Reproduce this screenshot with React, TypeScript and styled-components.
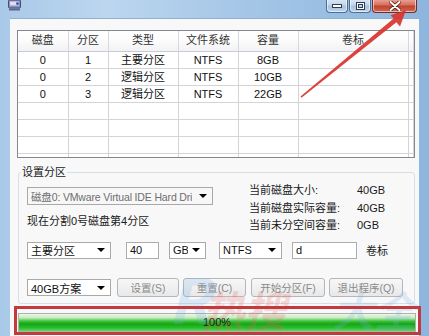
import React from "react";
import styled, { createGlobalStyle } from "styled-components";

const GlobalStyle = createGlobalStyle`
  html, body { margin: 0; padding: 0; background: #9cc1e6; }
  body { overflow: hidden; font-family: "Liberation Sans", "Noto Sans CJK SC", sans-serif; }
  * { box-sizing: border-box; }
`;

const Window = styled.div`
  position: relative;
  width: 429px;
  height: 336px;
  overflow: hidden;
  display: flex;
  flex-direction: column;
  background: linear-gradient(90deg, #a9c9e8 0%, #bcd6ef 25%, #a6c7e7 55%, #97bde2 80%, #8db5de 100%);
`;

const TitleBar = styled.div`
  height: 18px;
  flex: none;
  display: flex;
  align-items: flex-start;
  justify-content: space-between;
  padding: 0 12px 0 8px;
`;

const CaptionGroup = styled.div`
  display: flex;
  gap: 1px;
  margin-top: -1px;
`;

const CaptionButton = styled.div<{ $w: number; $close?: boolean }>`
  width: ${(p) => p.$w}px;
  height: 14px;
  display: flex;
  align-items: center;
  justify-content: center;
  border: 1px solid ${(p) => (p.$close ? "#7a2a22" : "#4f6e94")};
  border-top: none;
  border-radius: 0 0 4px 4px;
  box-shadow: inset 0 0 0 1px rgba(255, 255, 255, 0.55);
  background: ${(p) =>
    p.$close
      ? "linear-gradient(180deg, #e9a99c 0%, #d7705d 45%, #c2432e 55%, #d0694f 100%)"
      : "linear-gradient(180deg, #dde9f5 0%, #c3d6ea 45%, #a9c2df 55%, #bfd3ea 100%)"};
`;

const Client = styled.div`
  flex: 1;
  margin: 0 10px 0 10px;
  background: #f8f8f9;
  border-top: 1px solid #8fb0d2;
  padding: 11px 4px 0 7px;
  display: flex;
  flex-direction: column;
`;

const ListView = styled.div`
  height: 128px;
  flex: none;
  border: 1px solid #828790;
  background: #fff;
  overflow: hidden;
`;

const Grid = styled.table`
  border-collapse: collapse;
  table-layout: fixed;
  width: 100%;
  font-size: 11px;
  color: #111;
`;

const HeadCell = styled.th<{ $w?: number }>`
  width: ${(p) => (p.$w ? `${p.$w}px` : "auto")};
  height: 20px;
  padding: 0;
  font-weight: normal;
  text-align: center;
  color: #333;
  background: linear-gradient(180deg, #ffffff 0%, #fbfbfc 50%, #f1f2f4 100%);
  border-right: 1px solid #d6d9de;
  border-bottom: 1px solid #c8ccd2;
  line-height: 19px;
`;

const Cell = styled.td`
  height: 17px;
  padding: 0;
  text-align: center;
  line-height: 16px;
  border-right: 1px solid #d4d4d4;
  border-bottom: 1px solid #d4d4d4;
  white-space: nowrap;
  overflow: hidden;
`;

const GroupBox = styled.fieldset`
  margin: 8px 0 0 1px;
  width: 397px;
  padding: 0 8px 5px 8px;
  border: 1px solid #d5dfe5;
  border-radius: 3px;
  font-size: 11px;
  color: #1a1a1a;
  display: flex;
  flex-direction: column;
`;

const Legend = styled.legend`
  margin-left: -6px;
  padding: 0 1px;
  font-size: 11px;
  line-height: 13px;
  color: #1a1a1a;
`;

const TopSection = styled.div`
  display: flex;
  gap: 36px;
  margin-top: 3px;
`;

const LeftCol = styled.div`
  width: 186px;
  display: flex;
  flex-direction: column;
`;

const Note = styled.div`
  margin-top: 10px;
  line-height: 13px;
`;

const InfoGrid = styled.div`
  display: grid;
  grid-template-columns: 108px auto;
  grid-auto-rows: 17.5px;
  line-height: 17.5px;
`;

const Row = styled.div<{ $mt: number; $h: number }>`
  display: flex;
  align-items: center;
  height: ${(p) => p.$h}px;
  margin-top: ${(p) => p.$mt}px;
`;

const Combo = styled.div<{ $w: number; $h?: number; $disabled?: boolean; $ml?: number; $mt?: number }>`
  width: ${(p) => p.$w}px;
  height: ${(p) => p.$h ?? 17}px;
  margin-left: ${(p) => p.$ml ?? 0}px;
  margin-top: ${(p) => p.$mt ?? 0}px;
  flex: none;
  display: flex;
  align-items: center;
  justify-content: space-between;
  padding: 0 5px 0 3px;
  border: 1px solid #a9a9a9;
  background: ${(p) => (p.$disabled ? "#f7f7f7" : "#fff")};
  color: ${(p) => (p.$disabled ? "#6e6e6e" : "#111")};
  font-size: ${(p) => (p.$disabled ? "10.5px" : "11px")};
  letter-spacing: ${(p) => (p.$disabled ? "-0.15px" : "0")};
  white-space: nowrap;
  overflow: hidden;
`;

const ComboText = styled.span`
  overflow: hidden;
  white-space: nowrap;
`;

const Arrow = styled.span`
  flex: none;
  width: 0;
  height: 0;
  margin-left: 4px;
  border-left: 4px solid transparent;
  border-right: 4px solid transparent;
  border-top: 4px solid #000;
`;

const TextBox = styled.div<{ $w: number; $ml: number }>`
  width: ${(p) => p.$w}px;
  height: 17px;
  margin-left: ${(p) => p.$ml}px;
  flex: none;
  border: 1px solid #abadb3;
  background: #fff;
  padding-left: 3px;
  line-height: 15px;
  color: #111;
`;

const Label = styled.span<{ $ml: number }>`
  margin-left: ${(p) => p.$ml}px;
  color: #1a1a1a;
`;

const Button = styled.div<{ $w: number; $ml: number }>`
  width: ${(p) => p.$w}px;
  height: 19px;
  margin-left: ${(p) => p.$ml}px;
  flex: none;
  display: flex;
  align-items: center;
  justify-content: center;
  border: 1px solid #b3b6ba;
  border-radius: 3px;
  background: linear-gradient(180deg, #f7f7f7 0%, #f0f0f0 50%, #e8e8e8 100%);
  color: #8a8a8a;
  font-size: 10.5px;
  white-space: nowrap;
`;

const Progress = styled.div`
  position: relative;
  margin: 9px 0 0 1px;
  width: 398px;
  height: 19px;
  border: 1px solid #b0b0b0;
  background: linear-gradient(
    180deg,
    #eef7ec 0%,
    #c8ecc0 22%,
    #3cc43c 42%,
    #18a318 58%,
    #25bd27 80%,
    #5fd65f 100%
  );
  display: flex;
  align-items: center;
  justify-content: center;
  font-size: 11px;
  color: #111;
`;

const Overlay = styled.svg`
  position: absolute;
  left: 0;
  top: 0;
  pointer-events: none;
`;

const AnnotationBox = styled.div`
  position: absolute;
  left: 14px;
  top: 306px;
  width: 407px;
  height: 29px;
  border: 3px solid #c23a3e;
  pointer-events: none;
`;

const Watermark = styled.span<{ $x: number; $y: number; $c: string; $s: number }>`
  position: absolute;
  left: ${(p) => p.$x}px;
  top: ${(p) => p.$y}px;
  font-size: ${(p) => p.$s}px;
  font-weight: bold;
  font-style: italic;
  color: ${(p) => p.$c};
  font-family: "Noto Sans CJK SC", "Liberation Sans", sans-serif;
  line-height: 1;
  pointer-events: none;
`;

const columns = [
  { title: "磁盘", w: 50 },
  { title: "分区", w: 40 },
  { title: "类型", w: 70 },
  { title: "文件系统", w: 60 },
  { title: "容量", w: 60 },
  { title: "卷标", w: 110 },
  { title: "", w: 0 },
];

const rows: string[][] = [
  ["0", "1", "主要分区", "NTFS", "8GB", ""],
  ["0", "2", "逻辑分区", "NTFS", "10GB", ""],
  ["0", "3", "逻辑分区", "NTFS", "22GB", ""],
  ["", "", "", "", "", ""],
  ["", "", "", "", "", ""],
  ["", "", "", "", "", ""],
  ["", "", "", "", "", ""],
];

const info = [
  ["当前磁盘大小:", "40GB"],
  ["当前磁盘实际容量:", "40GB"],
  ["当前未分空间容量:", "0GB"],
];

export default function App() {
  return (
    <>
      <GlobalStyle />
      <Window>
        <TitleBar>
          <svg width="13" height="11" viewBox="0 0 13 11">
            <rect x="0.5" y="0" width="12" height="8" rx="1" fill="#8f8fb8" stroke="#4b4b7a" />
            <rect x="2" y="1.5" width="9" height="4" fill="#d9ddf2" />
            <rect x="1" y="8.5" width="11" height="2" fill="#5a6a8a" />
            <circle cx="9.5" cy="3.5" r="1.5" fill="#3a5fc0" />
          </svg>
          <CaptionGroup>
            <CaptionButton $w={22}>
              <svg width="10" height="5" viewBox="0 0 10 5">
                <rect x="0.5" y="1.5" width="9" height="3" fill="#fff" stroke="#2c3e58" />
              </svg>
            </CaptionButton>
            <CaptionButton $w={22}>
              <svg width="9" height="8" viewBox="0 0 9 8">
                <rect x="0.5" y="0.5" width="8" height="7" fill="#fff" stroke="#2c3e58" />
                <rect x="2.5" y="2.5" width="4" height="3" fill="#c3d6ea" stroke="#2c3e58" />
              </svg>
            </CaptionButton>
            <CaptionButton $w={45} $close>
              <svg width="12" height="10" viewBox="0 0 12 10">
                <path d="M1.5 1 L10.5 9 M10.5 1 L1.5 9" stroke="#5a1e18" strokeWidth="3.6" strokeLinecap="round" />
                <path d="M1.5 1 L10.5 9 M10.5 1 L1.5 9" stroke="#fff" strokeWidth="2" strokeLinecap="round" />
              </svg>
            </CaptionButton>
          </CaptionGroup>
        </TitleBar>
        <Client>
          <ListView>
            <Grid>
              <thead>
                <tr>
                  {columns.map((c, i) => (
                    <HeadCell key={i} $w={c.w || undefined}>
                      {c.title}
                    </HeadCell>
                  ))}
                </tr>
              </thead>
              <tbody>
                {rows.map((r, i) => (
                  <tr key={i}>
                    {r.map((v, j) => (
                      <Cell key={j}>{v}</Cell>
                    ))}
                    <Cell />
                  </tr>
                ))}
              </tbody>
            </Grid>
          </ListView>
          <GroupBox>
            <Legend>设置分区</Legend>
            <TopSection>
              <LeftCol>
                <Combo $w={186} $h={18} $disabled $mt={5}>
                  <ComboText>磁盘0: VMware Virtual IDE Hard Dri</ComboText>
                  <Arrow />
                </Combo>
                <Note>现在分割0号磁盘第4分区</Note>
              </LeftCol>
              <InfoGrid>
                {info.map(([k, v]) => (
                  <React.Fragment key={k}>
                    <span>{k}</span>
                    <span>{v}</span>
                  </React.Fragment>
                ))}
              </InfoGrid>
            </TopSection>
            <Row $mt={7} $h={17}>
              <Combo $w={84}>
                <ComboText>主要分区</ComboText>
                <Arrow />
              </Combo>
              <TextBox $w={33} $ml={15}>40</TextBox>
              <Combo $w={37} $ml={10}>
                <ComboText>GB</ComboText>
                <Arrow />
              </Combo>
              <Combo $w={63} $ml={13}>
                <ComboText>NTFS</ComboText>
                <Arrow />
              </Combo>
              <TextBox $w={65} $ml={10}>d</TextBox>
              <Label $ml={9}>卷标</Label>
            </Row>
            <Row $mt={19} $h={20}>
              <Combo $w={84}>
                <ComboText>40GB方案</ComboText>
                <Arrow />
              </Combo>
              <Button $w={62} $ml={6}>设置(S)</Button>
              <Button $w={63} $ml={4}>重置(C)</Button>
              <Button $w={74} $ml={5}>开始分区(F)</Button>
              <Button $w={74} $ml={4}>退出程序(Q)</Button>
            </Row>
          </GroupBox>
          <Progress>100%</Progress>
        </Client>
        <Watermark $x={168} $y={266} $c="rgba(120,175,228,0.22)" $s={62}>R</Watermark>
        <Watermark $x={202} $y={288} $c="rgba(235,95,95,0.24)" $s={42}>热搜</Watermark>
        <Watermark $x={332} $y={288} $c="rgba(120,175,228,0.22)" $s={42}>大全</Watermark>
        <AnnotationBox />
        <Overlay width="429" height="336" viewBox="0 0 429 336">
          <polygon
            points="301.5,97.8 396.4,22.2 400.0,26.4 406,10 390.6,15.2 393.6,18.4 300.5,96.4"
            fill="#d8332c"
            opacity="0.92"
          />
        </Overlay>
      </Window>
    </>
  );
}
